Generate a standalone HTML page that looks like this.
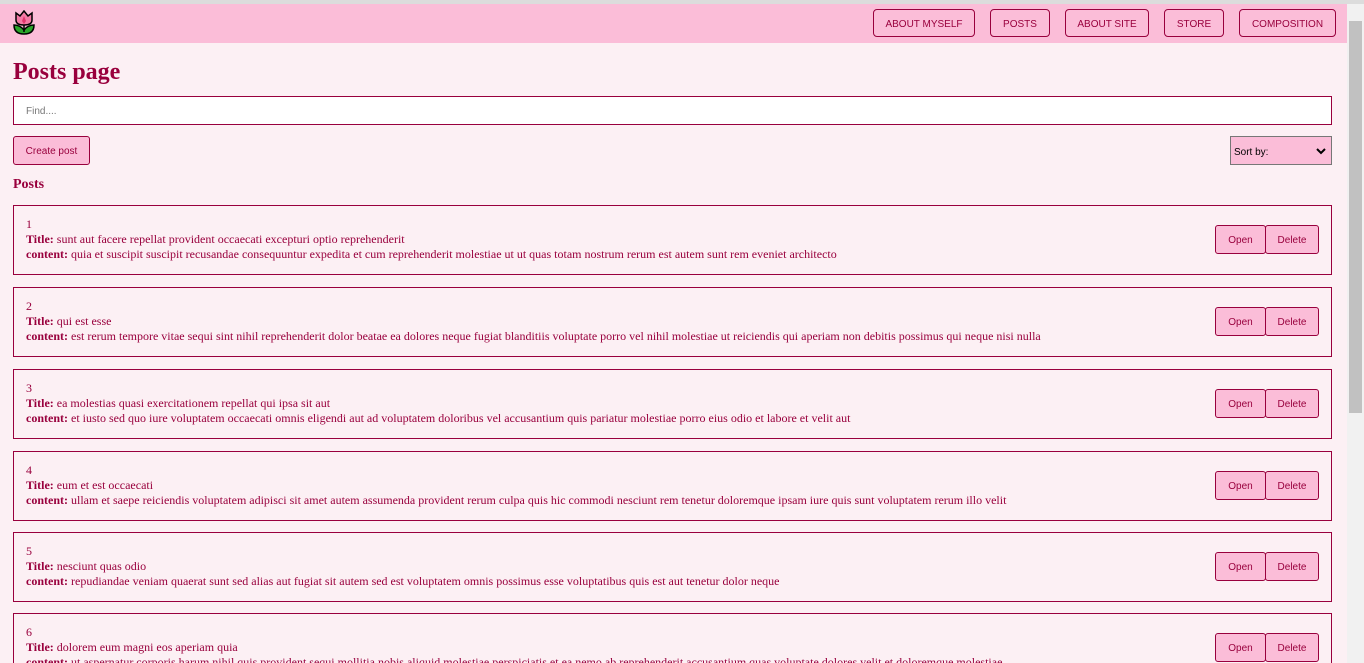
<!DOCTYPE html>
<html style="overflow:hidden;height:663px"><head><meta charset="utf-8"><style>
*{box-sizing:border-box;margin:0;padding:0}
body{width:1364px;height:663px;overflow:hidden;background:#fcf0f4;font-family:"Liberation Serif",serif;color:#99003d;position:relative}
.top{position:absolute;left:0;top:0;width:1364px;height:4px;background:#dcdcdc}
.nav{position:absolute;left:0;top:4px;width:1347px;height:39px;background:#fbbdd8}
.nb{position:absolute;top:5px;height:28px;border:1px solid #99003d;border-radius:4px;font:10px "Liberation Sans",sans-serif;color:#99003d;display:flex;align-items:center;justify-content:center;background:#fbbdd8;padding-top:2px}
.sb{position:absolute;left:1347px;top:4px;width:17px;height:659px;background:#f1f1f1}
.thumb{position:absolute;left:1349px;top:21px;width:13px;height:392px;background:#c1c1c1}
h1{position:absolute;left:13px;top:59px;font-size:24px;font-weight:bold}
.find{position:absolute;left:13px;top:96px;width:1319px;height:29px;border:1px solid #99003d;background:#fff;font:10px "Liberation Sans",sans-serif;color:#777;padding:9px 12px}
.create{position:absolute;left:13px;top:136px;width:77px;height:29px;border:1px solid #99003d;border-radius:3px;background:#fbbdd8;font:10px "Liberation Sans",sans-serif;display:flex;align-items:center;justify-content:center;padding-top:2px}
.sort{position:absolute;left:1230px;top:136px;width:102px;height:29px;border:1px solid #777;background:#fbbdd8;font:10px "Liberation Sans",sans-serif;color:#000;padding:10px 3px}
h3{position:absolute;left:13px;top:177px;font-size:14px;font-weight:bold}
.post{position:absolute;left:13px;width:1319px;height:70px;border:1px solid #99003d;padding:11px 12px;font-size:12px;line-height:15px;white-space:nowrap;overflow:hidden}
.btn{position:absolute;top:19px;height:29px;border:1px solid #99003d;border-radius:3px;background:#fbbdd8;font:10px "Liberation Sans",sans-serif;display:flex;align-items:center;justify-content:center;padding-top:2px}
</style></head><body>
<div class="top"></div>
<div class="nav">
<svg style="position:absolute;left:12px;top:6px" width="24" height="26" viewBox="0 0 24 26"><path d="M2 15 Q2 24 12 24 Q22 24 22 15 Q16 15 12 20 Q8 15 2 15Z" fill="#2aa52a" stroke="#000" stroke-width="1.5"/><path d="M12 14V22" stroke="#000" stroke-width="1.5"/><path d="M4 3 L8 6 L12 1 L16 6 L20 3 L20 10 Q20 15 12 15 Q4 15 4 10Z" fill="#f47aa6" stroke="#000" stroke-width="1.5"/><path d="M12 6 L10 11 L12 14 L14 11Z" fill="#e0366f"/></svg>
<div class="nb" style="left:873px;width:102px">ABOUT MYSELF</div>
<div class="nb" style="left:990px;width:60px">POSTS</div>
<div class="nb" style="left:1065px;width:84px">ABOUT SITE</div>
<div class="nb" style="left:1164px;width:60px">STORE</div>
<div class="nb" style="left:1239px;width:97px">COMPOSITION</div>
</div>
<div class="sb"></div><div class="thumb"></div>
<h1>Posts page</h1>
<div class="find">Find....</div>
<div class="create">Create post</div>
<div class="sort">Sort by:<svg style="position:absolute;right:5px;top:10px" width="10" height="8" viewBox="0 0 10 8"><path d="M1 2L5 6L9 2" fill="none" stroke="#000" stroke-width="2"/></svg></div>
<h3>Posts</h3>

<div class="post" style="top:205px">1<br><b>Title:</b> sunt aut facere repellat provident occaecati excepturi optio reprehenderit<br><b>content:</b> quia et suscipit suscipit recusandae consequuntur expedita et cum reprehenderit molestiae ut ut quas totam nostrum rerum est autem sunt rem eveniet architecto
<div class="btn" style="left:1201px;width:51px">Open</div><div class="btn" style="left:1251px;width:54px">Delete</div></div>
<div class="post" style="top:287px">2<br><b>Title:</b> qui est esse<br><b>content:</b> est rerum tempore vitae sequi sint nihil reprehenderit dolor beatae ea dolores neque fugiat blanditiis voluptate porro vel nihil molestiae ut reiciendis qui aperiam non debitis possimus qui neque nisi nulla
<div class="btn" style="left:1201px;width:51px">Open</div><div class="btn" style="left:1251px;width:54px">Delete</div></div>
<div class="post" style="top:369px">3<br><b>Title:</b> ea molestias quasi exercitationem repellat qui ipsa sit aut<br><b>content:</b> et iusto sed quo iure voluptatem occaecati omnis eligendi aut ad voluptatem doloribus vel accusantium quis pariatur molestiae porro eius odio et labore et velit aut
<div class="btn" style="left:1201px;width:51px">Open</div><div class="btn" style="left:1251px;width:54px">Delete</div></div>
<div class="post" style="top:451px">4<br><b>Title:</b> eum et est occaecati<br><b>content:</b> ullam et saepe reiciendis voluptatem adipisci sit amet autem assumenda provident rerum culpa quis hic commodi nesciunt rem tenetur doloremque ipsam iure quis sunt voluptatem rerum illo velit
<div class="btn" style="left:1201px;width:51px">Open</div><div class="btn" style="left:1251px;width:54px">Delete</div></div>
<div class="post" style="top:532px">5<br><b>Title:</b> nesciunt quas odio<br><b>content:</b> repudiandae veniam quaerat sunt sed alias aut fugiat sit autem sed est voluptatem omnis possimus esse voluptatibus quis est aut tenetur dolor neque
<div class="btn" style="left:1201px;width:51px">Open</div><div class="btn" style="left:1251px;width:54px">Delete</div></div>
<div class="post" style="top:613px">6<br><b>Title:</b> dolorem eum magni eos aperiam quia<br><b>content:</b> ut aspernatur corporis harum nihil quis provident sequi mollitia nobis aliquid molestiae perspiciatis et ea nemo ab reprehenderit accusantium quas voluptate dolores velit et doloremque molestiae
<div class="btn" style="left:1201px;width:51px">Open</div><div class="btn" style="left:1251px;width:54px">Delete</div></div>
</body></html>
